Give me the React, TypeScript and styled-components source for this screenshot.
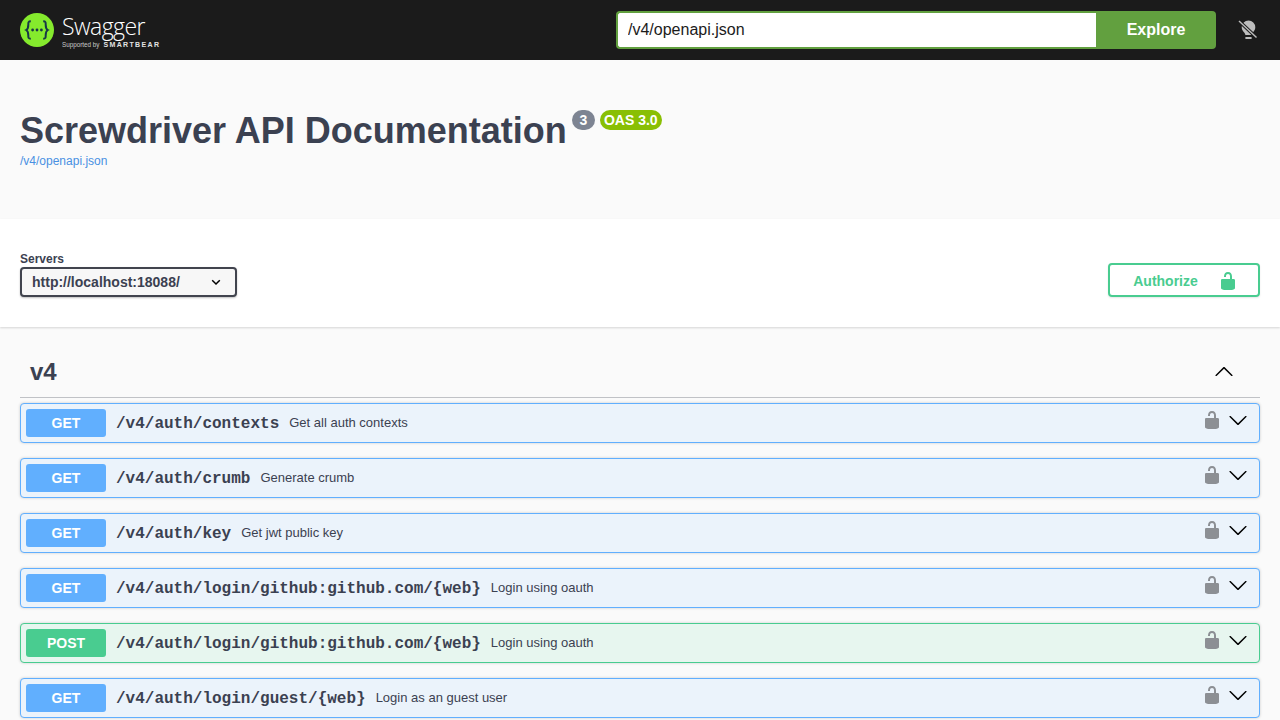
import React from "react";
import styled, { createGlobalStyle } from "styled-components";

const GlobalStyle = createGlobalStyle`
  html, body {
    margin: 0;
    padding: 0;
    height: 720px;
    overflow: hidden;
    background: #fafafa;
    font-family: "Liberation Sans", Arial, sans-serif;
    color: #3b4151;
  }
`;

const TopBar = styled.header`
  display: flex;
  align-items: center;
  height: 60px;
  padding: 0 20px;
  background: #1b1b1b;
`;

const Logo = styled.div`
  display: flex;
  align-items: center;
  gap: 8px;
  flex: 1;
`;

const LogoText = styled.div`
  display: flex;
  flex-direction: column;
  color: #fff;
`;

const LogoName = styled.span`
  font-family: "Open Sans", sans-serif;
  font-size: 23px;
  font-weight: 300;
  line-height: 24px;
  letter-spacing: -0.55px;
  margin-top: 3px;
`;

const LogoSub = styled.span`
  display: flex;
  align-items: center;
  gap: 4px;
  margin-top: 2px;
  font-size: 6.3px;
  line-height: 9px;
  color: #c8c8c8;
`;

const LogoBear = styled.b`
  font-size: 7px;
  letter-spacing: 1.35px;
  color: #e2e2e2;
`;

const SearchForm = styled.form`
  display: flex;
  width: 600px;
  height: 38px;
  margin-right: 20px;
`;

const SearchInput = styled.input`
  flex: 1;
  min-width: 0;
  box-sizing: border-box;
  padding: 0 10px;
  border: 2px solid #62a03f;
  border-right: 0;
  border-radius: 4px 0 0 4px;
  background: #fff;
  color: #1b1b1b;
  font-family: "Liberation Sans", Arial, sans-serif;
  font-size: 16px;
  outline: none;
`;

const ExploreButton = styled.button`
  width: 120px;
  border: 0;
  border-radius: 0 4px 4px 0;
  background: #62a03f;
  color: #fff;
  font-family: "Liberation Sans", Arial, sans-serif;
  font-size: 16px;
  font-weight: 700;
`;

const BulbButton = styled.div`
  display: flex;
  width: 24px;
  justify-content: center;
`;

const Info = styled.section`
  box-sizing: border-box;
  height: 159px;
  padding: 50px 20px 0;
`;

const TitleRow = styled.div`
  display: flex;
  align-items: flex-start;
`;

const Title = styled.h1`
  margin: 0;
  font-size: 36px;
  font-weight: 700;
  line-height: 41px;
`;

const Badge = styled.span<{ $bg: string; $width: number }>`
  display: flex;
  align-items: center;
  justify-content: center;
  box-sizing: border-box;
  width: ${(p) => p.$width}px;
  height: 20px;
  margin: 0 0 0 5px;
  border-radius: 57px;
  background: ${(p) => p.$bg};
  color: #fff;
  font-size: 14px;
  font-weight: 700;
`;

const SpecLink = styled.a`
  display: block;
  margin-top: 3px;
  color: #4990e2;
  font-size: 12px;
  line-height: 15px;
`;

const SchemeBar = styled.section`
  box-sizing: border-box;
  display: flex;
  align-items: flex-end;
  justify-content: space-between;
  height: 108px;
  padding: 0 20px 30px;
  background: #fff;
  box-shadow: 0 1px 2px 0 rgba(0, 0, 0, 0.15);
`;

const ServerLabel = styled.div`
  margin-bottom: 1px;
  font-size: 12px;
  font-weight: 700;
  line-height: 14px;
`;

const ServerSelect = styled.div`
  box-sizing: border-box;
  display: flex;
  align-items: center;
  justify-content: space-between;
  width: 217px;
  height: 30px;
  padding: 0 13px 0 10px;
  border: 2px solid #41444e;
  border-radius: 4px;
  background: #f7f7f7;
  box-shadow: 0 1px 2px 0 rgba(0, 0, 0, 0.25);
  font-size: 14px;
  font-weight: 700;
`;

const AuthorizeButton = styled.div`
  box-sizing: border-box;
  display: flex;
  align-items: center;
  justify-content: center;
  gap: 20px;
  width: 152px;
  height: 34px;
  padding: 1px 0 0 3px;
  border: 2px solid #49cc90;
  border-radius: 4px;
  background: transparent;
  box-shadow: 0 1px 2px rgba(0, 0, 0, 0.1);
  color: #49cc90;
  font-size: 14px;
  font-weight: 700;
`;

const Operations = styled.main`
  padding: 0 20px;
`;

const TagHeader = styled.div`
  box-sizing: border-box;
  display: flex;
  align-items: center;
  justify-content: space-between;
  height: 71px;
  margin-bottom: 5px;
  padding: 19px 26px 0 10px;
  border-bottom: 1px solid rgba(59, 65, 81, 0.3);
`;

const TagName = styled.h3`
  margin: 0;
  font-size: 24px;
  font-weight: 700;
  line-height: 32px;
`;

const OpRow = styled.div<{ $color: string; $bg: string }>`
  box-sizing: border-box;
  display: flex;
  align-items: center;
  height: 40px;
  margin-bottom: 15px;
  padding: 0 5px;
  border: 1px solid ${(p) => p.$color};
  border-radius: 4px;
  background: ${(p) => p.$bg};
  box-shadow: 0 0 3px rgba(0, 0, 0, 0.19);
`;

const Method = styled.span<{ $color: string }>`
  flex: none;
  width: 80px;
  height: 28px;
  border-radius: 3px;
  background: ${(p) => p.$color};
  color: #fff;
  font-size: 14px;
  font-weight: 700;
  line-height: 28px;
  text-align: center;
`;

const OpPath = styled.span`
  margin: 2px 0 0 10px;
  font-family: "Liberation Mono", "Courier New", monospace;
  font-size: 16px;
  font-weight: 700;
`;

const OpSummary = styled.span`
  flex: 1;
  margin: -2px 0 0 10px;
  font-size: 13px;
`;

const OpControls = styled.div`
  display: flex;
  align-items: center;
  gap: 6px;
  margin: -6px 6px 0 0;
`;

const ICON_LOCK_OPEN =
  "M15.8 8H14V5.6C14 2.703 12.665 1 10 1 7.334 1 6 2.703 6 5.6V6h2v-.801C8 3.754 8.797 3 10 3c1.203 0 2 .754 2 2.199V8H4c-.553 0-1 .646-1 1.199V17c0 .549.428 1.139.951 1.307l1.197.387C5.672 18.861 6.55 19 7.1 19h5.8c.549 0 1.428-.139 1.951-.307l1.196-.387c.524-.167.953-.757.953-1.306V9.199C17 8.646 16.352 8 15.8 8z";
const ICON_ARROW =
  "M17.418 6.109c.272-.268.709-.268.979 0s.271.701 0 .969l-7.908 7.83c-.27.268-.707.268-.979 0l-7.908-7.83c-.27-.268-.27-.701 0-.969.271-.268.709-.268.979 0L10 13.25l7.418-7.141z";

const LockIcon = ({ color }: { color: string }) => (
  <svg width="20" height="20" viewBox="0 0 20 20" fill={color}>
    <path d={ICON_LOCK_OPEN} />
  </svg>
);

const Arrow = ({ up }: { up?: boolean }) => (
  <svg width="20" height="20" viewBox="0 0 20 20" fill="#000" style={up ? { transform: "rotate(180deg)" } : undefined}>
    <path d={ICON_ARROW} />
  </svg>
);

const SwaggerMark = () => (
  <svg width="34" height="34" viewBox="0 0 34 34">
    <circle cx="17" cy="17" r="17" fill="#85ea2d" />
    <g fill="none" stroke="#173647" strokeWidth="2">
      <path d="M10.8 8.2c-2.7 0-2.5 1.7-2.5 3.5 0 2.5-.3 4.3-2.1 5.3 1.8 1 2.1 2.8 2.1 5.3 0 1.8-.2 3.5 2.5 3.5" />
      <path d="M23.2 8.2c2.7 0 2.5 1.7 2.5 3.5 0 2.5.3 4.3 2.1 5.3-1.8 1-2.1 2.8-2.1 5.3 0 1.8.2 3.5-2.5 3.5" />
    </g>
    <g fill="#173647">
      <circle cx="12.6" cy="17" r="1.4" />
      <circle cx="17" cy="17" r="1.4" />
      <circle cx="21.4" cy="17" r="1.4" />
    </g>
  </svg>
);

const BulbOff = () => (
  <svg width="20" height="22" viewBox="0 0 20 22">
    <path
      fill="#bdbdbd"
      d="M10.5 1.5a6.8 6.8 0 0 1 6.8 6.8c0 2.4-1.3 4-2.5 5.2-.7.7-1 1.5-1.1 2.5H7.4c-.1-1-.5-1.8-1.2-2.5-1.2-1.2-2.5-2.8-2.5-5.2a6.8 6.8 0 0 1 6.8-6.8z"
    />
    <rect x="7.4" y="18" width="6.2" height="2" fill="#bdbdbd" />
    <path d="M1.5 2.5l17 16" stroke="#1b1b1b" strokeWidth="3.4" />
    <path d="M1 2l17.5 16.5" stroke="#bdbdbd" strokeWidth="1.4" />
  </svg>
);

const SmallChevron = () => (
  <svg width="12" height="12" viewBox="0 0 12 12" fill="none" stroke="#000" strokeWidth="1.5">
    <path d="M2.2 4.2L6 8l3.8-3.8" />
  </svg>
);

const GET = { name: "GET", color: "#61affe", bg: "#ebf3fb" };
const POST = { name: "POST", color: "#49cc90", bg: "#e7f6ef" };

const operations = [
  { method: GET, path: "/v4/auth/contexts", summary: "Get all auth contexts" },
  { method: GET, path: "/v4/auth/crumb", summary: "Generate crumb" },
  { method: GET, path: "/v4/auth/key", summary: "Get jwt public key" },
  { method: GET, path: "/v4/auth/login/github:github.com/{web}", summary: "Login using oauth" },
  { method: POST, path: "/v4/auth/login/github:github.com/{web}", summary: "Login using oauth" },
  { method: GET, path: "/v4/auth/login/guest/{web}", summary: "Login as an guest user" },
];

export default function App() {
  return (
    <>
      <GlobalStyle />
      <TopBar>
        <Logo>
          <SwaggerMark />
          <LogoText>
            <LogoName>Swagger</LogoName>
            <LogoSub>
              Supported by <LogoBear>SMARTBEAR</LogoBear>
            </LogoSub>
          </LogoText>
        </Logo>
        <SearchForm>
          <SearchInput defaultValue="/v4/openapi.json" />
          <ExploreButton type="button">Explore</ExploreButton>
        </SearchForm>
        <BulbButton>
          <BulbOff />
        </BulbButton>
      </TopBar>
      <Info>
        <TitleRow>
          <Title>Screwdriver API Documentation</Title>
          <Badge $bg="#7d8492" $width={23}>3</Badge>
          <Badge $bg="#89bf04" $width={62}>OAS 3.0</Badge>
        </TitleRow>
        <SpecLink>/v4/openapi.json</SpecLink>
      </Info>
      <SchemeBar>
        <div>
          <ServerLabel>Servers</ServerLabel>
          <ServerSelect>
            http://localhost:18088/
            <SmallChevron />
          </ServerSelect>
        </div>
        <AuthorizeButton>
          Authorize
          <LockIcon color="#49cc90" />
        </AuthorizeButton>
      </SchemeBar>
      <Operations>
        <TagHeader>
          <TagName>v4</TagName>
          <Arrow up />
        </TagHeader>
        {operations.map((op, i) => (
          <OpRow key={i} $color={op.method.color} $bg={op.method.bg}>
            <Method $color={op.method.color}>{op.method.name}</Method>
            <OpPath>{op.path}</OpPath>
            <OpSummary>{op.summary}</OpSummary>
            <OpControls>
              <LockIcon color="#8c8f94" />
              <Arrow />
            </OpControls>
          </OpRow>
        ))}
      </Operations>
    </>
  );
}
